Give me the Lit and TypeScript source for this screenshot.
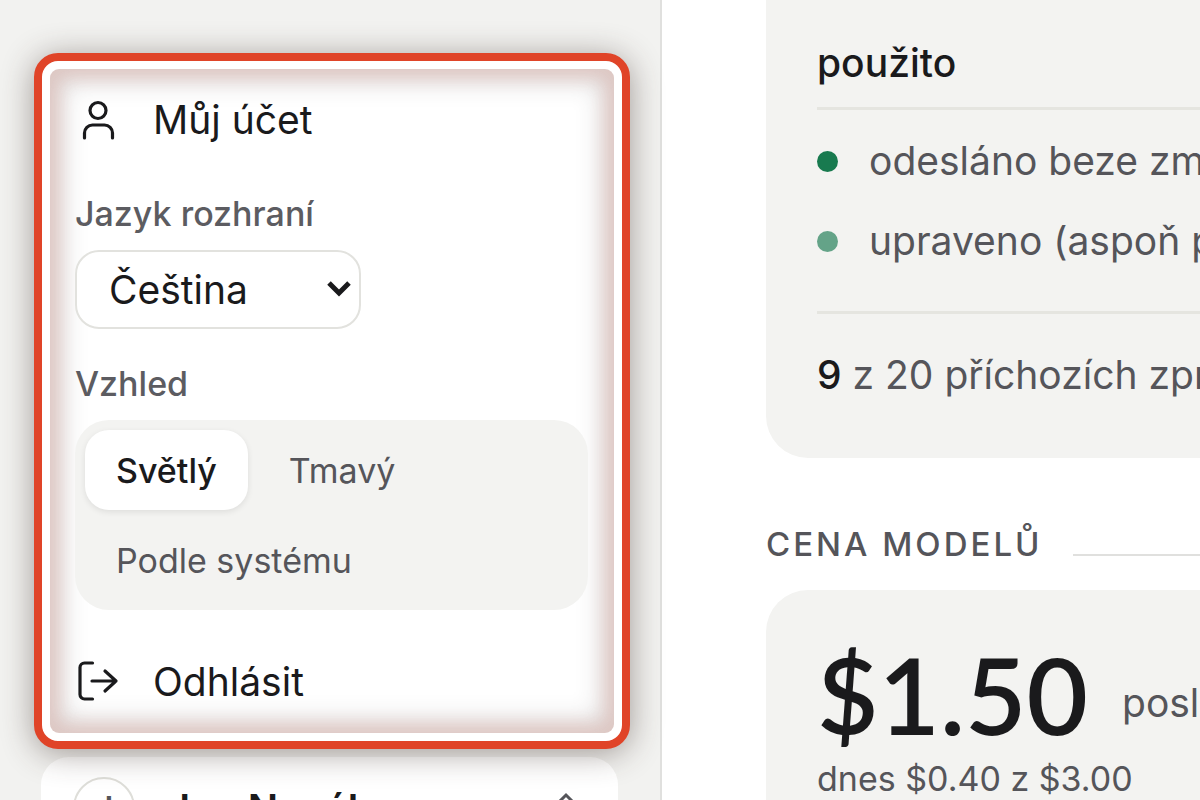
import { LitElement, html, css, svg } from "lit";
import { customElement, state } from "lit/decorators.js";

const userIcon = svg`<circle cx="23" cy="13.500" r="8"></circle><path d="M9.500 41v-5a8 8 0 0 1 8-8h12a8 8 0 0 1 8 8V41"></path>`;
const logoutIcon = svg`<path d="M17.500 4H9.500A4.500 4.500 0 0 0 5 8.500v27A4.500 4.500 0 0 0 9.500 40h8"></path><path d="M17 22H41M30 12l11 10-11 10"></path>`;

@customElement("account-menu")
class AccountMenu extends LitElement {
  @state() private theme = "Světlý";

  static styles = css`
    :host { display: block; position: relative; z-index: 1; }
    * { box-sizing: border-box; }
    .ring {
      border: 8px solid #e04428;
      border-radius: 24px;
      background: #fff;
      box-shadow: 0 4px 32px rgba(60, 45, 40, 0.46);
    }
    .panel {
      margin: 8px;
      padding: 20px 26px 22px 25px;
      border-radius: 9px;
      background: #fff;
      box-shadow: inset 0 0 16px 10px rgba(224, 68, 40, 0.13),
        inset 0 0 24px 14px rgba(60, 50, 50, 0.18);
    }
    .item {
      display: flex;
      align-items: center;
      gap: 34px;
      width: 100%;
      height: 60px;
      padding: 0;
      border: 0;
      background: none;
      color: #1a1a1c;
      font: inherit;
      font-size: 39px;
      text-align: left;
      text-decoration: none;
    }
    .icon {
      width: 44px;
      height: 44px;
      flex: none;
      fill: none;
      stroke: currentColor;
      stroke-width: 3.200;
      stroke-linecap: round;
      stroke-linejoin: round;
    }
    .label {
      display: block;
      margin: 0 0 16px;
      padding: 0;
      line-height: 40px;
      font-size: 34px;
      font-weight: 500;
      color: #5c5c61;
    }
    .field { margin: 45px 0 35px; }
    .picker { display: inline-grid; align-items: center; vertical-align: top; }
    .select {
      grid-area: 1 / 1;
      appearance: none;
      width: 286px;
      height: 79px;
      padding: 0 32px;
      border: 2px solid #e2e2de;
      border-radius: 24px;
      background: #fff;
      color: #1a1a1c;
      font: inherit;
      font-size: 39px;
    }
    .arrow {
      grid-area: 1 / 1;
      justify-self: end;
      width: 26px;
      height: 18px;
      margin-right: 9px;
      fill: none;
      stroke: #1a1a1c;
      stroke-width: 5;
      pointer-events: none;
    }
    .theme { margin: 0 0 41px; padding: 0; border: 0; min-width: 0; }
    .segments {
      display: flex;
      flex-wrap: wrap;
      gap: 10px;
      padding: 10px;
      border-radius: 34px;
      background: #f3f3f1;
    }
    .segment {
      height: 80px;
      padding: 0 31px;
      border: 0;
      border-radius: 24px;
      background: none;
      font: inherit;
      font-size: 34px;
      color: #55555a;
    }
    .segment[aria-pressed="true"] {
      background: #fff;
      color: #1a1a1c;
      font-weight: 500;
      box-shadow: 0 2px 6px rgba(0, 0, 0, 0.09);
    }
  `;

  render() {
    return html`
      <div class="ring">
        <div class="panel">
          <a class="item" href="#ucet"><svg class="icon" viewBox="0 0 44 44" aria-hidden="true">${userIcon}</svg>Můj účet</a>
          <div class="field">
            <label class="label" for="lang">Jazyk rozhraní</label>
            <div class="picker">
              <select class="select" id="lang"><option>Čeština</option></select>
              <svg class="arrow" viewBox="0 0 26 18" aria-hidden="true"><path d="M3 2l10 10L23 2"></path></svg>
            </div>
          </div>
          <fieldset class="theme">
            <legend class="label">Vzhled</legend>
            <div class="segments">
              ${["Světlý", "Tmavý", "Podle systému"].map(
                (t) => html`<button class="segment" type="button" aria-pressed=${t === this.theme} @click=${() => (this.theme = t)}>${t}</button>`
              )}
            </div>
          </fieldset>
          <button class="item" type="button"><svg class="icon" viewBox="0 0 44 44" aria-hidden="true">${logoutIcon}</svg>Odhlásit</button>
        </div>
      </div>
    `;
  }
}

@customElement("app-root")
class AppRoot extends LitElement {
  static styles = css`
    * { box-sizing: border-box; }
    :host {
      display: grid;
      grid-template-columns: 55% minmax(0, 1fr);
      height: 100vh;
      overflow: hidden;
      background: #fff;
      color: #1a1a1c;
      font-family: Inter, "Liberation Sans", sans-serif;
    }
    .side { padding: 53px 30px 0 34px; background: #f2f2f0; }
    .account {
      display: flex;
      align-items: center;
      gap: 32px;
      width: calc(100% - 19px);
      height: 102px;
      margin: 8px 12px 0 7px;
      padding: 0 32px;
      border: 0;
      border-radius: 28px;
      background: #fff;
      color: #1a1a1c;
      font: inherit;
      font-size: 40px;
      font-weight: 600;
      text-align: left;
    }
    .avatar {
      display: grid;
      place-items: center;
      width: 62px;
      height: 62px;
      border: 2px solid #deded9;
      border-radius: 50%;
      font-size: 32px;
      color: #55555a;
    }
    .chevron {
      width: 40px;
      height: 36px;
      margin-left: auto;
      fill: none;
      stroke: #55555a;
      stroke-width: 3;
    }
    .main { padding-left: 104px; border-left: 2px solid #e0e0de; white-space: nowrap; }
    .card { padding-left: 51px; background: #f3f3f1; color: #55555a; font-size: 39px; line-height: 52px; overflow: hidden; }
    .usage { padding-top: 37px; padding-bottom: 57px; border-bottom-left-radius: 42px; }
    .title { margin: 0; padding-bottom: 18px; border-bottom: 3px solid #e5e5e0; font-size: 39px; font-weight: 500; line-height: 52px; color: #1a1a1c; }
    .legend { display: grid; gap: 28px; margin: 0; padding: 25px 0 44px; border-bottom: 3px solid #e5e5e0; list-style: none; }
    .entry { display: flex; align-items: center; gap: 31px; }
    .dot { width: 21px; height: 21px; border-radius: 50%; background: #187a4f; }
    .edited { background: #64a388; }
    .total { margin: 0; padding-top: 35px; }
    .strong { font-weight: 500; color: #1a1a1c; }
    .section { display: flex; align-items: baseline; gap: 31px; margin: 66px 0 26px; font-size: 33px; font-weight: 500; line-height: 40px; letter-spacing: 3px; color: #55555a; }
    .section::after { content: ""; flex: 1; height: 2px; background: #e0e0de; }
    .cost { height: 300px; padding-top: 42px; border-top-left-radius: 42px; }
    .price { display: flex; align-items: flex-end; gap: 34px; margin: 0; }
    .amount { font-family: Lato, Inter, sans-serif; font-size: 106px; font-weight: 600; line-height: 124px; color: #1a1a1c; }
    .period { margin-bottom: 27px; }
    .today { margin: 0; font-size: 34px; line-height: 46px; }
  `;

  render() {
    return html`
      <aside class="side">
        <account-menu></account-menu>
        <button class="account" type="button">
          <span class="avatar">J</span>Jan Novák
          <svg class="chevron" viewBox="0 0 40 36" aria-hidden="true"><path d="M9 16L20 5l11 11"></path></svg>
        </button>
      </aside>
      <main class="main">
        <section class="card usage">
          <h3 class="title">použito</h3>
          <ul class="legend">
            <li class="entry"><span class="dot"></span>odesláno beze zm</li>
            <li class="entry"><span class="dot edited"></span>upraveno (aspoň p</li>
          </ul>
          <p class="total"><span class="strong">9</span> z 20 příchozích zpr</p>
        </section>
        <h2 class="section">CENA MODELŮ</h2>
        <section class="card cost">
          <p class="price"><span class="amount">$1.50</span><span class="period">posl</span></p>
          <p class="today">dnes $0.40 z $3.00</p>
        </section>
      </main>
    `;
  }
}
